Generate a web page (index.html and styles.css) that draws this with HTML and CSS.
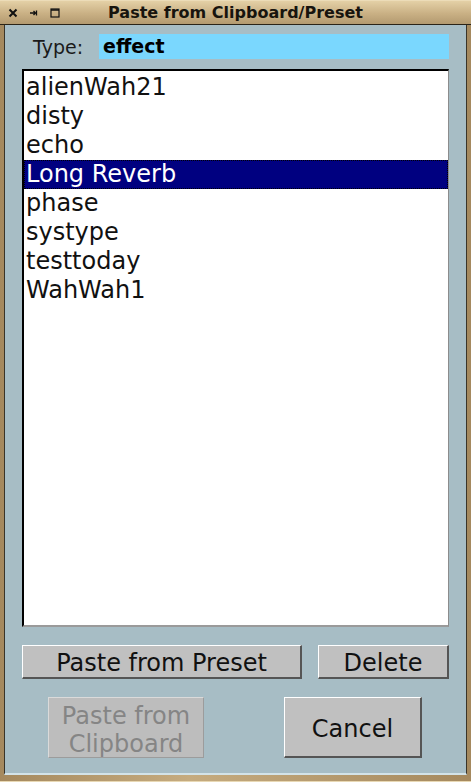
FILE: index.html
```html
<!DOCTYPE html>
<html>
<head>
<meta charset="utf-8">
<link rel="stylesheet" href="styles.css">
</head>
<body>
<div class="window">
  <div class="titlebar">
    <div class="tb-icons">
      <svg class="ic" width="10" height="10" viewBox="0 0 10 10"><path d="M1.5 1.5 L8.5 8.5 M8.5 1.5 L1.5 8.5" stroke="#111" stroke-width="2" fill="none"/></svg>
      <svg class="ic" width="10" height="10" viewBox="0 0 10 10"><path d="M1 5 H6.5 M4.5 3 L6.5 5 L4.5 7 M7.5 2.5 V7.5" stroke="#111" stroke-width="1.3" fill="none"/></svg>
      <svg class="ic" width="10" height="10" viewBox="0 0 10 10"><rect x="1" y="1" width="8" height="8" stroke="#111" stroke-width="1.2" fill="none"/><path d="M1 2 H9" stroke="#111" stroke-width="1.5"/></svg>
    </div>
    <div class="title">Paste from Clipboard/Preset</div>
  </div>
  <div class="frame">
    <div class="client">
      <div class="type-row">
        <span class="type-label">Type:</span>
        <div class="type-field">effect</div>
      </div>
      <div class="listbox">
        <div class="item">alienWah21</div>
        <div class="item">disty</div>
        <div class="item">echo</div>
        <div class="item selected">Long Reverb</div>
        <div class="item">phase</div>
        <div class="item">systype</div>
        <div class="item">testtoday</div>
        <div class="item">WahWah1</div>
      </div>
      <div class="btn-row1">
        <div class="btn btn-preset">Paste from Preset</div>
        <div class="btn btn-delete">Delete</div>
      </div>
      <div class="btn-row2">
        <div class="btn btn-clip disabled">Paste from<br>Clipboard</div>
        <div class="btn btn-cancel">Cancel</div>
      </div>
    </div>
  </div>
</div>
</body>
</html>
```

FILE: styles.css
```css
* { box-sizing: border-box; }
html, body { margin: 0; padding: 0; }
body {
  width: 471px;
  height: 782px;
  overflow: hidden;
  font-family: "DejaVu Sans", sans-serif;
  background: #b49a6e;
}
.window {
  width: 471px;
  height: 782px;
  display: flex;
  flex-direction: column;
}
.titlebar {
  height: 25px;
  position: relative;
  background: linear-gradient(#e4d0a6, #c9b084 55%, #b39a70);
  border-top: 1px solid #ecdcb8;
  border-bottom: 1px solid #2a2418;
  display: flex;
  align-items: center;
}
.tb-icons {
  display: flex;
  gap: 11px;
  padding-left: 8px;
  padding-top: 1px;
}
.ic { display: block; }
.title {
  position: absolute;
  left: 0;
  right: 0;
  top: 2px;
  text-align: center;
  font-weight: bold;
  font-size: 16px;
  color: #17140e;
}
.frame {
  flex: 1;
  padding: 0 4px 6px 4px;
  background: linear-gradient(90deg, #a5895e, #c5ab7f 40%, #a5895e);
  display: flex;
  border-bottom: 1px solid #e8d8b4;
}
.client {
  flex: 1;
  background: #a7bdc5;
  border-left: 1px solid #3a3428;
  border-right: 1px solid #3a3428;
  border-bottom: 2px solid #d3e3e8;
  padding: 9px 17px 0 17px;
  display: flex;
  flex-direction: column;
}
.type-row {
  display: flex;
  align-items: center;
  height: 25px;
}
.type-label {
  width: 77px;
  padding-left: 11px;
  font-size: 19px;
  color: #1a1a1a;
}
.type-field {
  flex: 1;
  height: 25px;
  background: #7ad7fe;
  font-weight: bold;
  font-size: 19px;
  padding-left: 4px;
  line-height: 25px;
  color: #000;
}
.listbox {
  margin-top: 10px;
  height: 558px;
  background: #fff;
  border-top: 2px solid #000;
  border-left: 2px solid #000;
  border-right: 1px solid #8c8c8c;
  border-bottom: 2px solid #9a9a9a;
  padding-top: 2px;
}
.item {
  height: 29px;
  line-height: 27px;
  font-size: 24px;
  color: #111;
  border: 1px dotted transparent;
  padding-left: 1px;
  white-space: nowrap;
}
.item.selected {
  background: #000080;
  color: #fff;
  border: 1px dotted #fff;
  outline: 1px dotted #000;
  outline-offset: -1px;
}
.btn {
  background: #c0c0c0;
  border-top: 1px solid #fff;
  border-left: 1px solid #fff;
  border-right: 2px solid #555;
  border-bottom: 2px solid #555;
  display: flex;
  align-items: center;
  justify-content: center;
  text-align: center;
  font-size: 24px;
  color: #111;
  padding-top: 3px;
}
.btn.disabled {
  color: #858585;
  border-right: 1px solid #9c9c9c;
  border-bottom: 1px solid #9c9c9c;
  border-top: 1px solid #dadada;
  border-left: 1px solid #dadada;
  line-height: 28px;
  background: #bdbdbd;
  padding-top: 4px;
}
.btn-row1 {
  margin-top: 18px;
  display: flex;
  justify-content: space-between;
  height: 34px;
}
.btn-preset { width: 280px; }
.btn-delete { width: 131px; }
.btn-row2 {
  margin-top: 18px;
  display: flex;
  height: 61px;
  padding-left: 26px;
}
.btn-clip { width: 156px; }
.btn-cancel { width: 138px; margin-left: 80px; }
```
